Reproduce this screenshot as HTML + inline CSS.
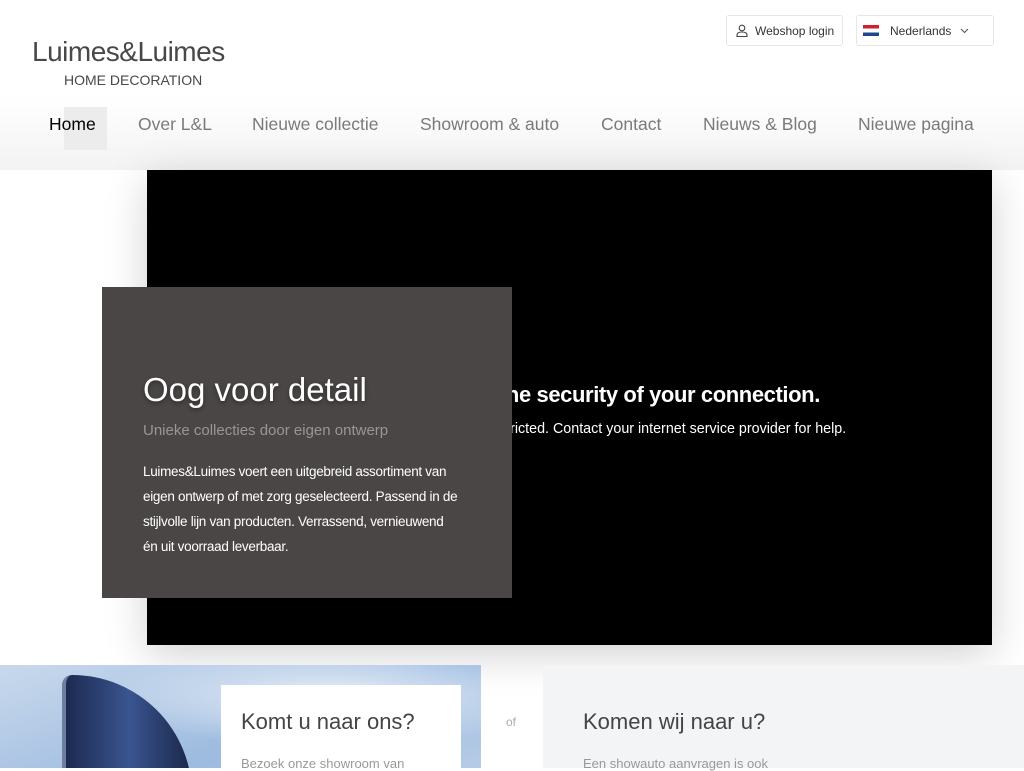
<!DOCTYPE html>
<html><head><meta charset="utf-8"><style>
*{margin:0;padding:0;box-sizing:border-box}
body{width:1024px;height:768px;overflow:hidden;background:#fff;font-family:"Liberation Sans",sans-serif;position:relative}
.hdr{position:absolute;left:0;top:0;width:1024px;height:170px;background:linear-gradient(#fff 0,#fff 95px,#f3f3f3 170px)}
.logo1{position:absolute;left:32px;top:36px;font-size:28px;color:#4a4747;letter-spacing:-0.5px}
.logo2{position:absolute;left:64px;top:72px;font-size:14px;color:#4a4747}
.btn{position:absolute;top:15px;height:31px;border:1px solid #e6e6e6;border-radius:3px;background:#fff;font-size:12px;color:#333;display:flex;align-items:center}
.nav{position:absolute;top:114px;font-size:17.5px;color:#7a7a7a}
.homebg{position:absolute;left:64px;top:107px;width:43px;height:43px;background:#ececec}
.video{position:absolute;left:147px;top:170px;width:845px;height:475px;background:#000;box-shadow:0 10px 40px rgba(0,0,0,.18)}
.box{position:absolute;left:102px;top:287px;width:410px;height:311px;background:#4a4646;color:#fff}
.right{position:absolute;left:543px;top:665px;width:481px;height:103px;background:#f3f4f6}
</style></head><body>
<div class="hdr"></div>
<div class="logo1">Luimes&amp;Luimes</div>
<div class="logo2">HOME DECORATION</div>
<div class="btn" style="left:726px;width:117px;padding-left:9px">
<svg width="12" height="13" viewBox="0 0 12 13" fill="none" stroke="#444" stroke-width="1.1"><circle cx="6" cy="4" r="2.8"/><path d="M1 12.5v-1.5c0-2 2-3 5-3s5 1 5 3v1.5z"/></svg>
<span style="margin-left:7px">Webshop login</span></div>
<div class="btn" style="left:856px;width:138px;padding-left:6px">
<div style="width:16px;height:11px;background:linear-gradient(#d0202a 33%,#fff 33% 66%,#21468b 66%);margin-right:11px"></div>
<span>Nederlands</span>
<svg style="margin-left:9px" width="9" height="6" viewBox="0 0 9 6" fill="none" stroke="#555" stroke-width="1.1"><path d="M1 1l3.5 3.5L8 1"/></svg></div>
<div class="homebg"></div>
<div class="nav" style="left:49px;color:#000">Home</div>
<div class="nav" style="left:138px">Over L&amp;L</div>
<div class="nav" style="left:252px">Nieuwe collectie</div>
<div class="nav" style="left:420px">Showroom &amp; auto</div>
<div class="nav" style="left:601px">Contact</div>
<div class="nav" style="left:703px">Nieuws &amp; Blog</div>
<div class="nav" style="left:858px">Nieuwe pagina</div>
<div class="video">
<div style="position:absolute;left:352px;top:212px;font-size:22px;font-weight:bold;color:#fff;letter-spacing:-0.4px">the security of your connection.</div>
<div style="position:absolute;left:344px;top:251px;font-size:14.3px;color:#fff">estricted. Contact your internet service provider for help.</div>
</div>
<div class="box">
<div style="position:absolute;left:41px;top:84px;font-size:33px;text-shadow:0 2px 4px rgba(0,0,0,.4)">Oog voor detail</div>
<div style="position:absolute;left:41px;top:135px;font-size:15px;color:#9a9696">Unieke collecties door eigen ontwerp</div>
<div style="position:absolute;left:41px;top:172px;white-space:nowrap;font-size:13.5px;line-height:25px;letter-spacing:-0.3px">Luimes&amp;Luimes voert een uitgebreid assortiment van<br>eigen ontwerp of met zorg geselecteerd. Passend in de<br>stijlvolle lijn van producten. Verrassend, vernieuwend<br>én uit voorraad leverbaar.</div>
</div>
<div style="position:absolute;left:0;top:665px;width:481px;height:103px;background:radial-gradient(ellipse at 70% 30%,#e6eef7,transparent 50%),linear-gradient(160deg,#c9d9ec,#9dbbe0 60%,#b6cbe6);overflow:hidden">
<div style="position:absolute;left:62px;top:10px;width:130px;height:120px;background:linear-gradient(90deg,#1c2a50,#3a5590,#1a2748);border-radius:10px 120px 0 0;border-left:4px solid #6e7ea0"></div>
</div>
<div style="position:absolute;left:221px;top:685px;width:240px;height:83px;background:#fff">
<div style="position:absolute;left:20px;top:24px;font-size:22px;color:#444">Komt u naar ons?</div>
<div style="position:absolute;left:20px;top:71px;font-size:13px;color:#999">Bezoek onze showroom van</div></div>
<div style="position:absolute;left:506px;top:715px;font-size:12px;color:#aaa">of</div>
<div class="right">
<div style="position:absolute;left:40px;top:44px;font-size:22px;color:#444">Komen wij naar u?</div>
<div style="position:absolute;left:40px;top:91px;font-size:13px;color:#999">Een showauto aanvragen is ook</div></div>
</body></html>
